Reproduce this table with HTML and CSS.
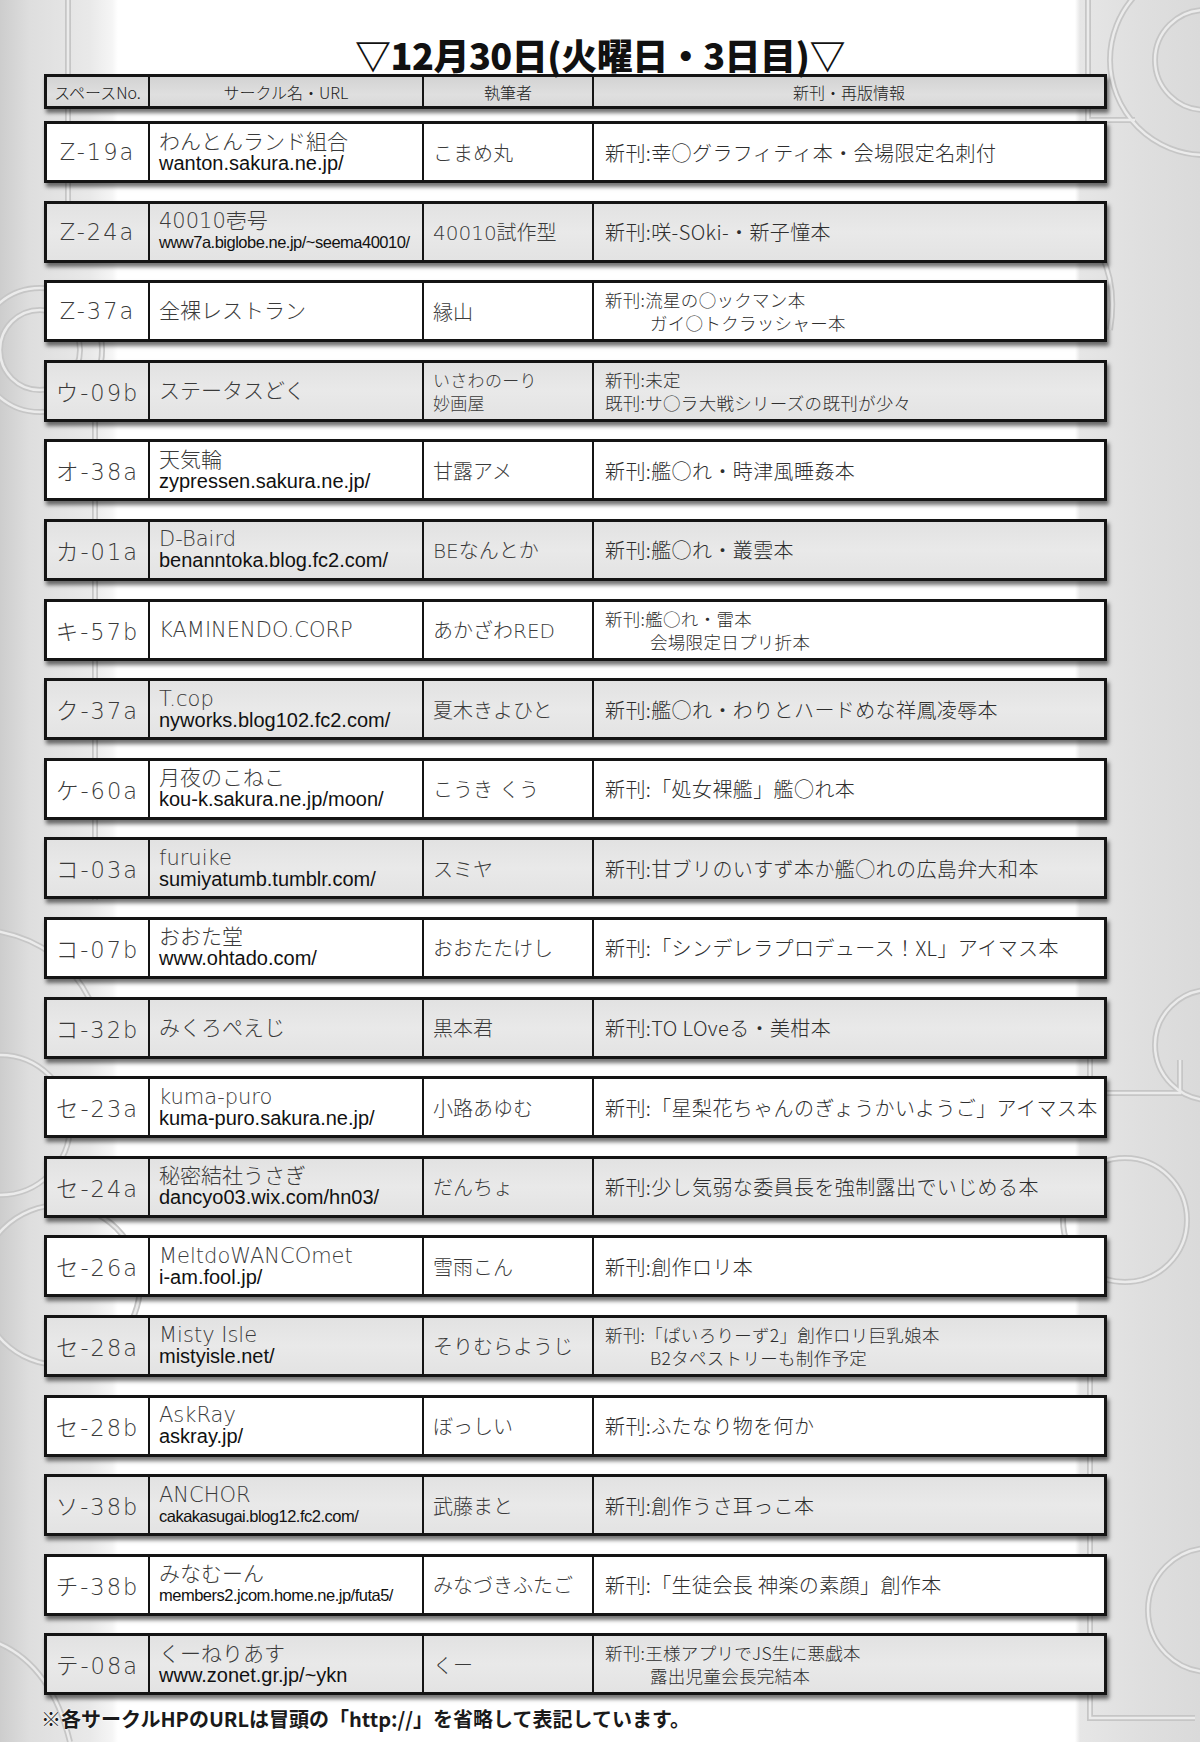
FILE: index.html
```html
<!DOCTYPE html>
<html lang="ja">
<head>
<meta charset="utf-8">
<title>12月30日 サークル一覧</title>
<link rel="stylesheet" href="styles.css">
</head>
<body>
<svg class="deco" width="1200" height="1742" viewBox="0 0 1200 1742" aria-hidden="true">
  <g class="deco-outer">
    <path d="M68 -10 V200 Q68 215 83 215 H112"/>
    <circle cx="40" cy="350" r="62"/>
    <circle cx="40" cy="350" r="40"/>
    <path d="M95 400 V900"/>
    <path d="M-10 930 Q60 940 90 1000"/>
    <circle cx="0" cy="1125" r="70"/>
    <circle cx="60" cy="1285" r="80"/>
    <path d="M-10 1640 Q50 1660 70 1742"/>
    <circle cx="1205" cy="60" r="95"/>
    <circle cx="1205" cy="60" r="50"/>
    <path d="M1088 -10 V120 H1135"/>
    <path d="M1085 230 Q1120 270 1110 330"/>
    <circle cx="1210" cy="1045" r="55"/>
    <path d="M1090 1000 V1093 H1180 V1060"/>
    <circle cx="1125" cy="1220" r="62"/>
    <path d="M1090 1330 V1718 H1195"/>
    <circle cx="1210" cy="1610" r="62"/>
  </g>
  <g class="deco-inner">
    <path d="M68 -10 V200 Q68 215 83 215 H112"/>
    <circle cx="40" cy="350" r="62"/>
    <circle cx="40" cy="350" r="40"/>
    <path d="M95 400 V900"/>
    <path d="M-10 930 Q60 940 90 1000"/>
    <circle cx="0" cy="1125" r="70"/>
    <circle cx="60" cy="1285" r="80"/>
    <path d="M-10 1640 Q50 1660 70 1742"/>
    <circle cx="1205" cy="60" r="95"/>
    <circle cx="1205" cy="60" r="50"/>
    <path d="M1088 -10 V120 H1135"/>
    <path d="M1085 230 Q1120 270 1110 330"/>
    <circle cx="1210" cy="1045" r="55"/>
    <path d="M1090 1000 V1093 H1180 V1060"/>
    <circle cx="1125" cy="1220" r="62"/>
    <path d="M1090 1330 V1718 H1195"/>
    <circle cx="1210" cy="1610" r="62"/>
  </g>
</svg>

<main class="page">
  <h1 class="title">▽12月30日(火曜日・3日目)▽</h1>

  <div class="row head">
    <div class="cell">スペースNo.</div>
    <div class="cell">サークル名・URL</div>
    <div class="cell">執筆者</div>
    <div class="cell">新刊・再版情報</div>
  </div>

  <div class="rows">
    <div class="row">
      <div class="cell no">Z-19a</div>
      <div class="cell name"><span class="nm">わんとんランド組合</span><span class="url">wanton.sakura.ne.jp/</span></div>
      <div class="cell au">こまめ丸</div>
      <div class="cell info">新刊:幸○グラフィティ本・会場限定名刺付</div>
    </div>
    <div class="row alt">
      <div class="cell no">Z-24a</div>
      <div class="cell name"><span class="nm">40010壱号</span><span class="url tight">www7a.biglobe.ne.jp/~seema40010/</span></div>
      <div class="cell au">40010試作型</div>
      <div class="cell info">新刊:咲-SOki-・新子憧本</div>
    </div>
    <div class="row">
      <div class="cell no">Z-37a</div>
      <div class="cell name"><span class="nm">全裸レストラン</span></div>
      <div class="cell au">縁山</div>
      <div class="cell info small"><span>新刊:流星の○ックマン本</span><span class="indent">ガイ○トクラッシャー本</span></div>
    </div>
    <div class="row alt">
      <div class="cell no">ウ-09b</div>
      <div class="cell name"><span class="nm">ステータスどく</span></div>
      <div class="cell au small"><span>いさわのーり</span><span>妙画屋</span></div>
      <div class="cell info small"><span>新刊:未定</span><span>既刊:サ○ラ大戦シリーズの既刊が少々</span></div>
    </div>
    <div class="row">
      <div class="cell no">オ-38a</div>
      <div class="cell name"><span class="nm">天気輪</span><span class="url">zypressen.sakura.ne.jp/</span></div>
      <div class="cell au">甘露アメ</div>
      <div class="cell info">新刊:艦○れ・時津風睡姦本</div>
    </div>
    <div class="row alt">
      <div class="cell no">カ-01a</div>
      <div class="cell name"><span class="nm">D-Baird</span><span class="url">benanntoka.blog.fc2.com/</span></div>
      <div class="cell au">BEなんとか</div>
      <div class="cell info">新刊:艦○れ・叢雲本</div>
    </div>
    <div class="row">
      <div class="cell no">キ-57b</div>
      <div class="cell name"><span class="nm">KAMINENDO.CORP</span></div>
      <div class="cell au">あかざわRED</div>
      <div class="cell info small"><span>新刊:艦○れ・雷本</span><span class="indent">会場限定日プリ折本</span></div>
    </div>
    <div class="row alt">
      <div class="cell no">ク-37a</div>
      <div class="cell name"><span class="nm">T.cop</span><span class="url">nyworks.blog102.fc2.com/</span></div>
      <div class="cell au">夏木きよひと</div>
      <div class="cell info">新刊:艦○れ・わりとハードめな祥鳳凌辱本</div>
    </div>
    <div class="row">
      <div class="cell no">ケ-60a</div>
      <div class="cell name"><span class="nm">月夜のこねこ</span><span class="url">kou-k.sakura.ne.jp/moon/</span></div>
      <div class="cell au">こうき くう</div>
      <div class="cell info">新刊:「処女裸艦」艦○れ本</div>
    </div>
    <div class="row alt">
      <div class="cell no">コ-03a</div>
      <div class="cell name"><span class="nm">furuike</span><span class="url">sumiyatumb.tumblr.com/</span></div>
      <div class="cell au">スミヤ</div>
      <div class="cell info">新刊:甘ブリのいすず本か艦○れの広島弁大和本</div>
    </div>
    <div class="row">
      <div class="cell no">コ-07b</div>
      <div class="cell name"><span class="nm">おおた堂</span><span class="url">www.ohtado.com/</span></div>
      <div class="cell au">おおたたけし</div>
      <div class="cell info">新刊:「シンデレラプロデュース！XL」アイマス本</div>
    </div>
    <div class="row alt">
      <div class="cell no">コ-32b</div>
      <div class="cell name"><span class="nm">みくろぺえじ</span></div>
      <div class="cell au">黒本君</div>
      <div class="cell info">新刊:TO LOveる・美柑本</div>
    </div>
    <div class="row">
      <div class="cell no">セ-23a</div>
      <div class="cell name"><span class="nm">kuma-puro</span><span class="url">kuma-puro.sakura.ne.jp/</span></div>
      <div class="cell au">小路あゆむ</div>
      <div class="cell info">新刊:「星梨花ちゃんのぎょうかいようご」アイマス本</div>
    </div>
    <div class="row alt">
      <div class="cell no">セ-24a</div>
      <div class="cell name"><span class="nm">秘密結社うさぎ</span><span class="url">dancyo03.wix.com/hn03/</span></div>
      <div class="cell au">だんちょ</div>
      <div class="cell info">新刊:少し気弱な委員長を強制露出でいじめる本</div>
    </div>
    <div class="row">
      <div class="cell no">セ-26a</div>
      <div class="cell name"><span class="nm">MeltdoWANCOmet</span><span class="url">i-am.fool.jp/</span></div>
      <div class="cell au">雪雨こん</div>
      <div class="cell info">新刊:創作ロリ本</div>
    </div>
    <div class="row alt">
      <div class="cell no">セ-28a</div>
      <div class="cell name"><span class="nm">Misty Isle</span><span class="url">mistyisle.net/</span></div>
      <div class="cell au">そりむらようじ</div>
      <div class="cell info small"><span>新刊:「ぱいろりーず2」創作ロリ巨乳娘本</span><span class="indent">B2タペストリーも制作予定</span></div>
    </div>
    <div class="row">
      <div class="cell no">セ-28b</div>
      <div class="cell name"><span class="nm">AskRay</span><span class="url">askray.jp/</span></div>
      <div class="cell au">ぼっしい</div>
      <div class="cell info">新刊:ふたなり物を何か</div>
    </div>
    <div class="row alt">
      <div class="cell no">ソ-38b</div>
      <div class="cell name"><span class="nm">ANCHOR</span><span class="url tight">cakakasugai.blog12.fc2.com/</span></div>
      <div class="cell au">武藤まと</div>
      <div class="cell info">新刊:創作うさ耳っこ本</div>
    </div>
    <div class="row">
      <div class="cell no">チ-38b</div>
      <div class="cell name"><span class="nm">みなむーん</span><span class="url tight">members2.jcom.home.ne.jp/futa5/</span></div>
      <div class="cell au">みなづきふたご</div>
      <div class="cell info">新刊:「生徒会長 神楽の素顔」創作本</div>
    </div>
    <div class="row alt">
      <div class="cell no">テ-08a</div>
      <div class="cell name"><span class="nm">くーねりあす</span><span class="url">www.zonet.gr.jp/~ykn</span></div>
      <div class="cell au">くー</div>
      <div class="cell info small"><span>新刊:王様アプリでJS生に悪戯本</span><span class="indent">露出児童会長完結本</span></div>
    </div>
  </div>

  <p class="note">※各サークルHPのURLは冒頭の「http://」を省略して表記しています。</p>
</main>
</body>
</html>
```

FILE: styles.css
```css
* { box-sizing: border-box; }

html, body {
  margin: 0;
  padding: 0;
}

body {
  width: 1200px;
  height: 1742px;
  position: relative;
  overflow: hidden;
  background: linear-gradient(to right,
    #cdcdcd 0,
    #dedede 30px,
    #e9e9e9 90px,
    #f5f5f5 112px,
    #ffffff 118px,
    #ffffff 1075px,
    #e6e6e6 1080px,
    #dfdfdf 1140px,
    #dadada 1200px);
  font-family: "DejaVu Sans", "Noto Sans CJK JP", sans-serif;
  color: #333;
}

.deco {
  position: absolute;
  left: 0;
  top: 0;
  z-index: 0;
}

.deco-outer {
  fill: none;
  stroke: #c6c6c6;
  stroke-width: 6;
}

.deco-inner {
  fill: none;
  stroke: #ebebeb;
  stroke-width: 2.5;
}

.page {
  position: relative;
  z-index: 1;
  padding: 34px 0 0 44px;
}

.title {
  width: 1200px;
  margin: 0 0 0 -44px;
  text-align: center;
  font-family: "Noto Sans CJK JP", sans-serif;
  font-weight: 900;
  font-size: 36px;
  line-height: 40px;
  letter-spacing: -0.5px;
  color: #111;
}

.row {
  width: 1063px;
  height: 62px;
  display: grid;
  grid-template-columns: 101px 274px 170px 1fr;
  border: 3px solid #141414;
  background: #fff;
  box-shadow: 2px 4px 4px rgba(0, 0, 0, 0.55);
}

.row.alt {
  background: linear-gradient(to bottom, #e2e2e2, #e9e9e9 50%, #e3e3e3);
}

.row.head {
  height: 35px;
  margin-bottom: 12px;
  background: linear-gradient(to bottom, #d3d3d3, #dfdfdf 60%, #d9d9d9);
}

.rows {
  display: flex;
  flex-direction: column;
  gap: 17.6px;
}

.cell {
  display: flex;
  flex-direction: column;
  justify-content: center;
  padding-left: 9px;
  border-left: 2px solid #141414;
  white-space: nowrap;
  overflow: hidden;
}

.cell:first-child {
  border-left: none;
}

.head .cell {
  align-items: center;
  padding-left: 0;
  font-family: "Noto Sans CJK JP", sans-serif;
  font-weight: 300;
  font-size: 16px;
  color: #222;
  line-height: 1;
}

.no {
  align-items: center;
  padding-left: 0;
  font-size: 22.5px;
  font-weight: 300;
  letter-spacing: 2px;
  color: #3a3a3a;
}

.name .nm {
  font-size: 21px;
  font-weight: 300;
  line-height: 22px;
  color: #3a3a3a;
}

.url {
  font-family: "Liberation Sans", Arial, sans-serif;
  font-size: 20px;
  line-height: 21px;
  color: #111;
  letter-spacing: 0;
}

.url.tight {
  font-size: 16.5px;
  letter-spacing: -0.5px;
}

.au {
  font-size: 20px;
  font-weight: 300;
  color: #3a3a3a;
}

.info {
  padding-left: 11px;
  font-family: "Noto Sans CJK JP", sans-serif;
  font-weight: 300;
  font-size: 20px;
  letter-spacing: 0.4px;
  color: #2e2e2e;
}

.small {
  font-size: 17.5px;
  line-height: 23px;
  letter-spacing: 0.3px;
}

.au.small {
  font-family: "Noto Sans CJK JP", sans-serif;
  font-size: 17px;
}

.indent {
  padding-left: 45px;
}

.note {
  margin: 10px 0 0 -3px;
  font-family: "Noto Sans CJK JP", sans-serif;
  font-weight: 700;
  font-size: 20px;
  line-height: 28px;
  color: #1a1a1a;
  text-shadow: 0 0 2px #fff, 0 0 2px #fff;
}
```
